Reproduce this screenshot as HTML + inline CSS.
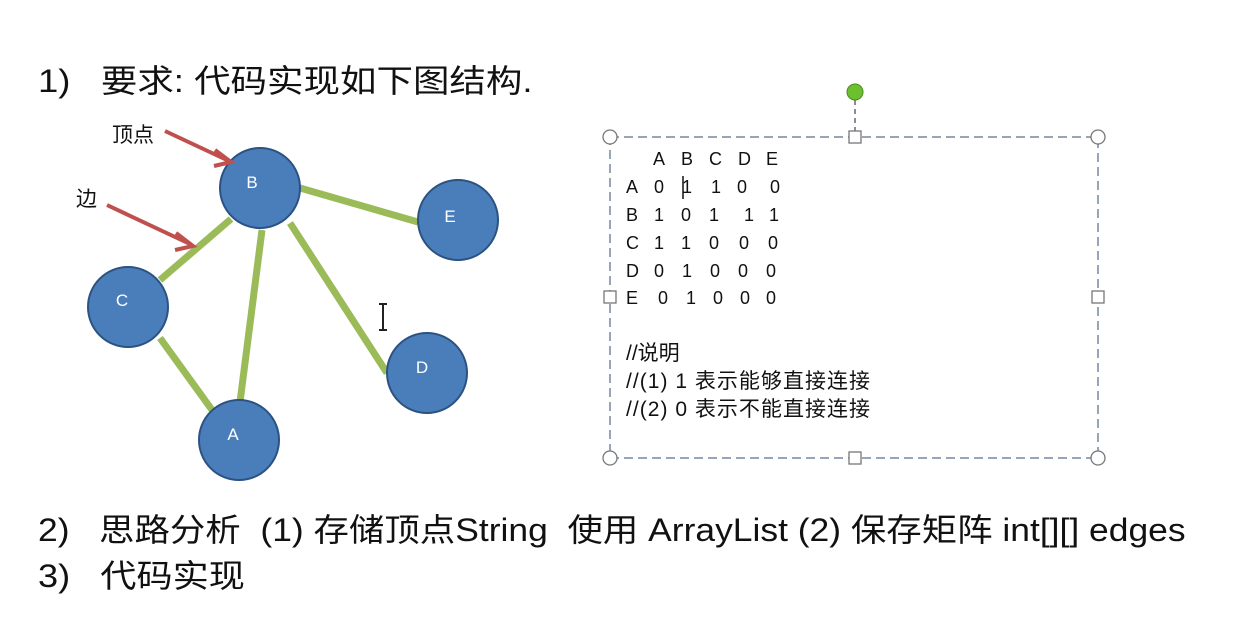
<!DOCTYPE html>
<html><head><meta charset="utf-8"><style>
body{margin:0;width:1241px;height:619px;background:#fff;overflow:hidden;position:relative;font-family:"Liberation Sans","Noto Sans CJK SC",sans-serif;color:#111}
.t{position:absolute;white-space:nowrap;transform-origin:left center}
</style></head><body>
<div class="t" style="left:38px;top:56px;font-size:32px;transform:scaleX(1.14)">1)&nbsp;&nbsp;&nbsp;要求: 代码实现如下图结构.</div>
<div class="t" style="left:38px;top:505px;font-size:32px;transform:scaleX(1.107)">2)&nbsp;&nbsp;&nbsp;思路分析&nbsp; (1) 存储顶点String&nbsp; 使用 ArrayList (2) 保存矩阵 int[][] edges</div>
<div class="t" style="left:38px;top:551px;font-size:32px;transform:scaleX(1.13)">3)&nbsp;&nbsp;&nbsp;代码实现</div>
<svg width="1241" height="619" style="position:absolute;left:0;top:0">
<g stroke="#9bbb59" stroke-width="7">
<line x1="300" y1="188" x2="418" y2="222"/>
<line x1="231" y1="219" x2="160" y2="280"/>
<line x1="262" y1="230" x2="240" y2="402"/>
<line x1="290" y1="223" x2="387" y2="373"/>
<line x1="160" y1="338" x2="212" y2="410"/>
</g>
<g fill="#4a7ebb" stroke="#2c5282" stroke-width="2">
<circle cx="260" cy="188" r="40"/><circle cx="458" cy="220" r="40"/>
<circle cx="128" cy="307" r="40"/><circle cx="427" cy="373" r="40"/>
<circle cx="239" cy="440" r="40"/>
</g>
<g fill="#fff" font-size="17" font-family="Liberation Sans" text-anchor="middle">
<text x="252" y="188">B</text><text x="450" y="222">E</text><text x="122" y="306">C</text><text x="422" y="373">D</text><text x="233" y="440">A</text>
</g>
<g stroke="#c0504d" stroke-width="4" fill="none">
<line x1="165" y1="131" x2="229" y2="161"/><polyline points="215,150 231,162 214,166"/>
<line x1="107" y1="205" x2="190" y2="244"/><polyline points="176,233 193,246 175,250"/>
</g>
<path d="M379 304h8M383 304v26M379 330h8" stroke="#222" stroke-width="2" fill="none"/>
<line x1="855" y1="100" x2="855" y2="135" stroke="#667" stroke-width="1.5" stroke-dasharray="5,4"/>
<circle cx="855" cy="92" r="8" fill="#6cc02e" stroke="#4a8a20"/>
<rect x="610" y="137" width="488" height="321" fill="none" stroke="#7088a0" stroke-width="1.5" stroke-dasharray="9,5"/>
<g fill="#fff" stroke="#777" stroke-width="1.3">
<circle cx="610" cy="137" r="7"/><circle cx="1098" cy="137" r="7"/><circle cx="610" cy="458" r="7"/><circle cx="1098" cy="458" r="7"/>
<rect x="849" y="131" width="12" height="12"/><rect x="849" y="452" width="12" height="12"/>
<rect x="604" y="291" width="12" height="12"/><rect x="1092" y="291" width="12" height="12"/>
</g>
<g font-size="18" font-family="Liberation Sans" fill="#111">
<text x="653" y="165">A</text><text x="681" y="165">B</text><text x="709" y="165">C</text><text x="738" y="165">D</text><text x="766" y="165">E</text>
<text x="626" y="193">A</text><text x="654" y="193">0</text><text x="682" y="193">1</text><text x="711" y="193">1</text><text x="737" y="193">0</text><text x="770" y="193">0</text>
<text x="626" y="221">B</text><text x="654" y="221">1</text><text x="681" y="221">0</text><text x="709" y="221">1</text><text x="744" y="221">1</text><text x="769" y="221">1</text>
<text x="626" y="249">C</text><text x="654" y="249">1</text><text x="681" y="249">1</text><text x="709" y="249">0</text><text x="739" y="249">0</text><text x="768" y="249">0</text>
<text x="626" y="277">D</text><text x="654" y="277">0</text><text x="682" y="277">1</text><text x="710" y="277">0</text><text x="738" y="277">0</text><text x="766" y="277">0</text>
<text x="626" y="304">E</text><text x="658" y="304">0</text><text x="686" y="304">1</text><text x="713" y="304">0</text><text x="740" y="304">0</text><text x="766" y="304">0</text>
</g>
<line x1="683" y1="176" x2="683" y2="199" stroke="#111" stroke-width="1.5"/>
<g font-size="21" font-family="Liberation Sans,Noto Sans CJK SC,sans-serif" fill="#111">
<text x="626" y="360">//说明</text>
<text x="626" y="388" textLength="244">//(1) 1 表示能够直接连接</text>
<text x="626" y="416" textLength="244">//(2) 0 表示不能直接连接</text>
</g>
<g font-size="21" font-family="Noto Sans CJK SC,sans-serif" fill="#111">
<text x="112" y="142">顶点</text><text x="76" y="206">边</text>
</g>
</svg>
</body></html>
